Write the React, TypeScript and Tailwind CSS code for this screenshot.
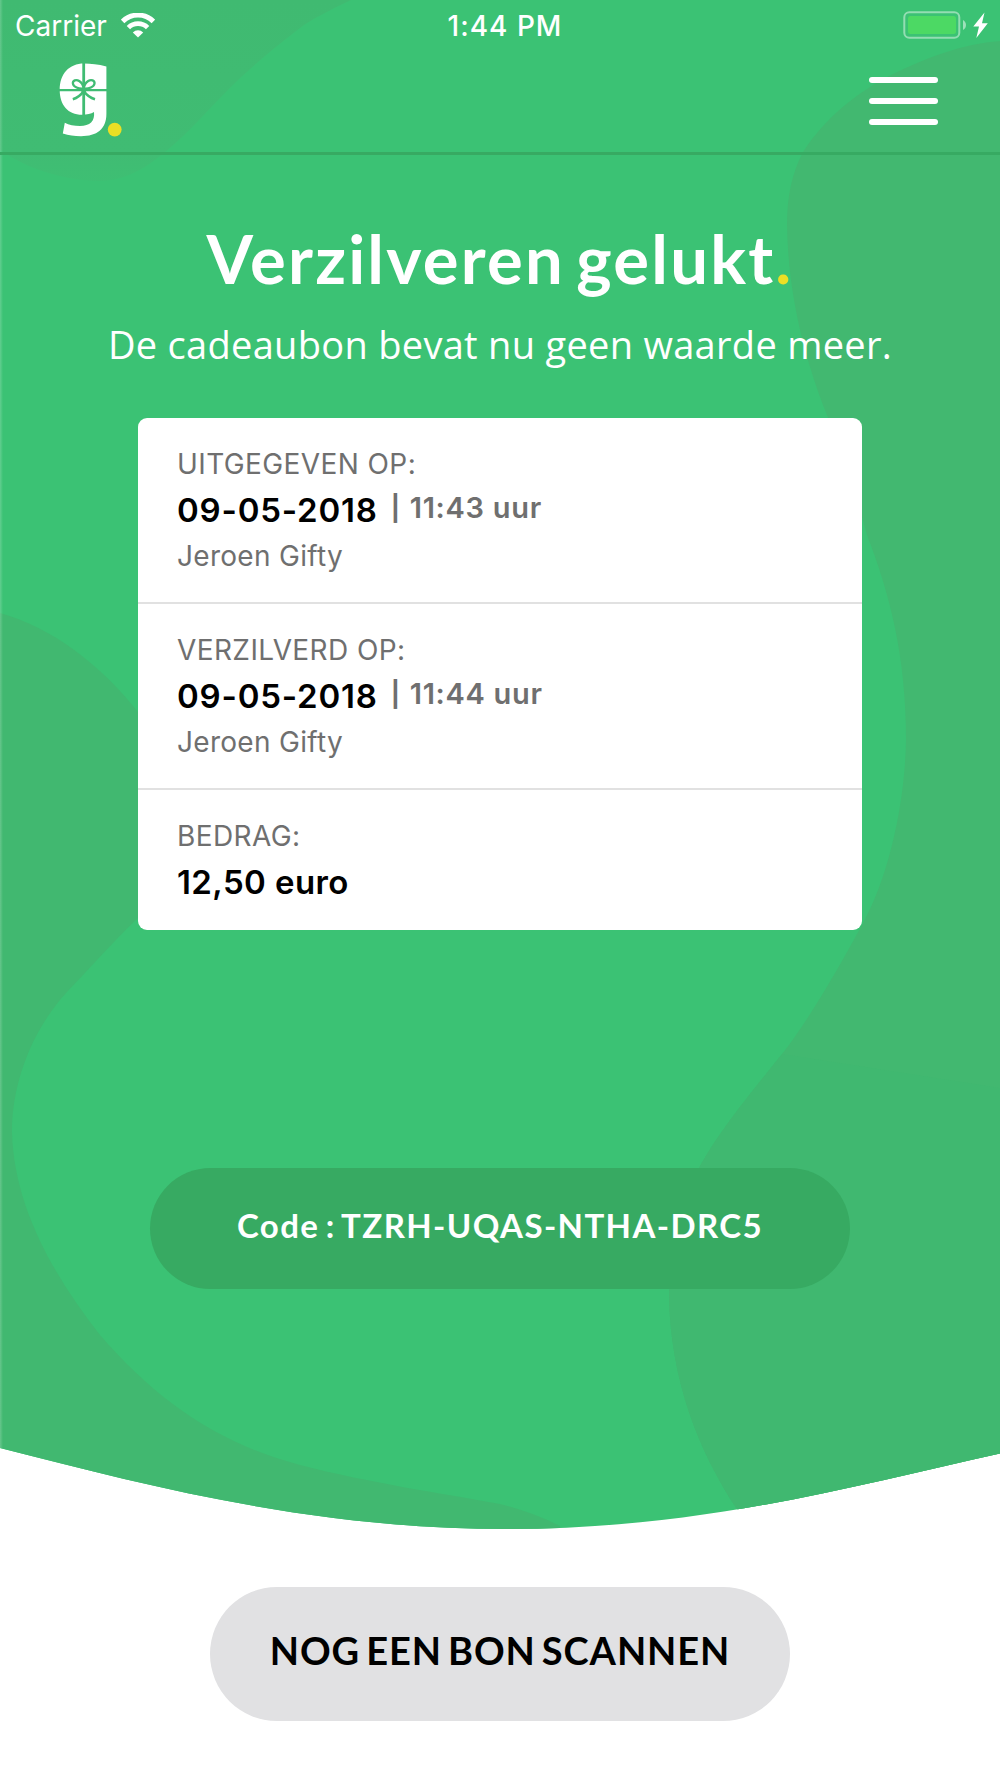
import type { ReactNode } from "react";

type Entry = {
  label: string;
  value: string;
  time?: string;
  name?: string;
};

const entries: Entry[] = [
  {
    label: "UITGEGEVEN OP:",
    value: "09-05-2018",
    time: "11:43 uur",
    name: "Jeroen Gifty",
  },
  {
    label: "VERZILVERD OP:",
    value: "09-05-2018",
    time: "11:44 uur",
    name: "Jeroen Gifty",
  },
  { label: "BEDRAG:", value: "12,50 euro" },
];

function Backdrop() {
  return (
    <svg
      className="absolute inset-x-0 top-0"
      width="1000"
      height="1532"
      viewBox="0 0 1000 1532"
    >
      <defs>
        <clipPath id="hero">
          <path d="M0 0H1000V1453.5C850 1487 700 1529 508 1529C310 1529 150 1486 0 1448Z" />
        </clipPath>
        <linearGradient id="fade" x1="0" y1="0" x2="0" y2="1">
          <stop offset="0" stopColor="#40ba71" />
          <stop offset="0.85" stopColor="#40bc73" />
          <stop offset="1" stopColor="#3ebf73" />
        </linearGradient>
        <linearGradient id="edge">
          <stop offset="0" stopColor="#fff" stopOpacity="0.2" />
          <stop offset="1" stopColor="#fff" stopOpacity="0" />
        </linearGradient>
      </defs>
      <g clipPath="url(#hero)">
        <rect width="1000" height="1532" fill="#3bc274" />
        <path
          d="M0 0H351C330 10 312 19 300 28C270 51 245 72 220 98C200 119 182 139 160 156C140 172 121 181 99 181C62 180 28 169 0 150Z"
          fill="url(#fade)"
        />
        <path
          d="M1000 41C962 44 928 57 895 73C858 91 825 118 803 152C792 173 787 196 787 225C788 295 805 360 827 415C843 457 858 501 867 535C890 595 906 656 906 740C905 800 890 875 862 925C832 980 805 1025 782 1054C750 1094 722 1127 700 1166C684 1202 669 1245 669 1294C670 1380 699 1452 737 1509L760 1532H1000Z"
          fill="#42b870"
        />
        <path
          d="M782 1054L1000 1088V1532H760L737 1509C699 1452 670 1380 669 1294C669 1245 684 1202 700 1166C722 1127 750 1094 782 1054Z"
          fill="#40b870"
        />
        <path
          d="M0 613C52 627 102 666 138 712C190 800 180 880 137 919C110 945 90 968 67 992C38 1023 12 1075 12 1132C14 1210 57 1280 100 1335C158 1402 220 1444 300 1465C370 1483 440 1493 500 1504C520 1509 540 1516 560 1526V1532H0Z"
          fill="#41b870"
        />
        <rect width="3" height="1532" fill="url(#edge)" />
      </g>
    </svg>
  );
}

function WifiIcon() {
  return (
    <svg width="34" height="25" viewBox="0 0 34 25" fill="none">
      <path d="M1.6 8.4a22 22 0 0 1 30.8 0" stroke="#fff" strokeWidth="5" />
      <path d="M7.4 14.6a13.8 13.8 0 0 1 19.2 0" stroke="#fff" strokeWidth="4.8" />
      <path d="M11.8 19.4a7.5 7.5 0 0 1 10.4 0L17 24.6Z" fill="#fff" />
    </svg>
  );
}

function BatteryIcon() {
  return (
    <svg width="86" height="28" viewBox="0 0 86 28" fill="none">
      <rect x="1.3" y="1.3" width="55" height="25.4" rx="5" stroke="#fff" strokeOpacity="0.45" strokeWidth="2" />
      <rect x="5" y="5" width="48" height="18" rx="2.5" fill="#4cd964" />
      <path d="M60 9C64 11 64 17 60 19Z" fill="#fff" fillOpacity="0.5" />
      <path d="M81.5 1.5L70.3 15.5H76L73.3 27L84.8 12.3H79Z" fill="#fff" />
    </svg>
  );
}

function Logo() {
  return (
    <svg width="64" height="76" viewBox="59 62 64 76" fill="none">
      <path
        d="M106.4 66.5C98 64.3 91 63.6 84 63.6C69 63.6 59.7 74 59.7 90C59.7 105 68 114.8 82 114.8C87 114.8 91 113.8 94 112C95 121 90 126 80 126C74 126 69 125 64.8 122.8L62.8 133.5C69 135.5 74 136.2 81 136.2C97 136.2 106.4 129 106.4 114Z"
        fill="#fff"
      />
      <g stroke="#40bc73">
        <path d="M83.7 62V116" strokeWidth="2.8" />
        <path d="M59 90.1H107" strokeWidth="2.4" />
        <path
          d="M83.7 88.5C78.5 89 73.5 87 72.9 83.6C72.5 80.4 76.2 79 79.2 81C82 82.9 83.3 85.5 83.7 88.5C84.1 85.5 85.4 82.9 88.2 81C91.2 79 94.9 80.4 94.5 83.6C93.9 87 88.9 89 83.7 88.5Z"
          fill="#fff"
          strokeWidth="2.3"
        />
        <path d="M83.7 91C81 95 77 98 72.8 99.2M83.7 91C86.5 95 90.5 98 95 99.2" strokeWidth="2.5" />
      </g>
      <circle cx="83.7" cy="90" r="2.6" fill="#40bc73" />
      <circle cx="114.7" cy="129.6" r="6.9" fill="#ebdf25" />
    </svg>
  );
}

function StatusBar() {
  return (
    <div className="flex h-[50px] items-center justify-between pr-[11px] pl-[15px] text-[28px] text-white">
      <div className="flex w-[330px] items-center gap-[14px]">
        <span className="pt-0.5">Carrier</span>
        <WifiIcon />
      </div>
      <span className="pt-0.5 pl-[6px] font-medium tracking-[1px]">1:44 PM</span>
      <div className="flex w-[330px] justify-end">
        <BatteryIcon />
      </div>
    </div>
  );
}

function Row({ entry, children }: { entry: Entry; children?: ReactNode }) {
  return (
    <div className="px-[39px] pt-[23px]">
      <p className="h-[46px] text-[28px] leading-[46px] tracking-[0.4px]">
        {entry.label}
      </p>
      <p className="flex h-[46px] items-center whitespace-pre text-[33px] leading-[46px] font-semibold tracking-[0.8px] text-black">
        <span className={entry.time ? "" : "tracking-[0.4px]"}>
          {entry.value}
        </span>
        {entry.time && (
          <span className="ml-[13px] flex items-center gap-[9px] pb-[5px] text-[29px] tracking-[0.7px] text-[#6f6f6f]">
            <span className="text-[25px] font-bold">|</span>
            {entry.time}
          </span>
        )}
      </p>
      {children}
    </div>
  );
}

export default function App() {
  return (
    <div className="relative h-[1778px] w-[1000px] overflow-hidden bg-white font-['Inter',sans-serif]">
      <Backdrop />

      <div className="relative flex flex-col items-center">
        <header className="h-[155px] w-full border-b-[3px] border-[#37aa62]">
          <StatusBar />
          <div className="flex items-start justify-between pt-3 pr-[62px] pl-[59px]">
            <Logo />
            <button className="mt-[15px] flex flex-col gap-[15px]">
              <span className="h-[6px] w-[69px] rounded-full bg-white" />
              <span className="h-[6px] w-[69px] rounded-full bg-white" />
              <span className="h-[6px] w-[69px] rounded-full bg-white" />
            </button>
          </div>
        </header>

        <h1 className="mt-[63px] h-[90px] whitespace-nowrap font-['Lato',sans-serif] text-[67px] leading-[80px] font-bold tracking-[2.2px] [word-spacing:-7px] text-white">
          Verzilveren gelukt<span className="text-[#ebdf25]">.</span>
        </h1>
        <p className="h-[110px] whitespace-nowrap pt-[10px] font-['Open_Sans',sans-serif] text-[38px] leading-[52px] tracking-[0.3px] text-white">
          De cadeaubon bevat nu geen waarde meer.
        </p>

        <section className="h-[512px] w-[724px] divide-y-2 divide-[#e1e1e1] rounded-[9px] bg-white text-[#6f6f6f]">
          {entries.map((entry) => (
            <div key={entry.label} className="h-[186px] last:h-[140px]">
              <Row entry={entry}>
                {entry.name && (
                  <p className="h-[46px] text-[28px] leading-[46px] tracking-[0.3px]">
                    {entry.name}
                  </p>
                )}
              </Row>
            </div>
          ))}
        </section>

        <div className="mt-[238px] flex h-[121px] w-[700px] items-center justify-center rounded-[61px] bg-[#37aa62] pb-[6px] font-['Lato',sans-serif] text-[33px] font-bold tracking-[1.4px] [word-spacing:-3px] whitespace-nowrap text-white">
          Code : TZRH-UQAS-NTHA-DRC5
        </div>

        <button className="mt-[298px] flex h-[134px] w-[580px] items-center justify-center rounded-[67px] bg-[#e1e1e3] pb-[8px] font-['Lato',sans-serif] text-[38px] font-bold tracking-[0.9px] [word-spacing:-4px] whitespace-nowrap text-black">
          NOG EEN BON SCANNEN
        </button>
      </div>
    </div>
  );
}
